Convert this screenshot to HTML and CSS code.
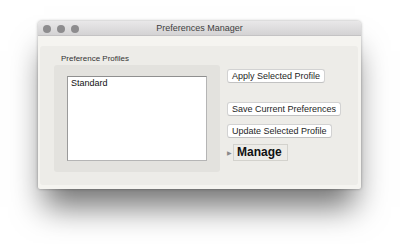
FILE: index.html
```html
<!DOCTYPE html>
<html lang="en">

<head>
  <meta charset="UTF-8">
  <title>Preferences Manager</title>
  <link rel="stylesheet" href="styles.css">
</head>

<body>
  <div class="window">
    <div class="titlebar">
      <div class="lights">
        <span class="light"></span>
        <span class="light"></span>
        <span class="light"></span>
      </div>
      <div class="title">Preferences Manager</div>
    </div>
    <div class="content">
      <div class="panel">
        <div class="profiles">
          <div class="group-label">Preference Profiles</div>
          <div class="group">
            <div class="list">
              <div class="item">Standard</div>
            </div>
          </div>
        </div>
        <div class="actions">
          <button class="btn">Apply Selected Profile</button>
          <button class="btn btn-save">Save Current Preferences</button>
          <button class="btn">Update Selected Profile</button>
          <div class="manage">
            <span class="arrow">&#9654;</span>
            <span class="manage-box">Manage</span>
          </div>
        </div>
      </div>
    </div>
  </div>
</body>

</html>
```

FILE: styles.css
```css
* {
  margin: 0px;
  padding: 0px;
  box-sizing: border-box;
  font-family: "Liberation Sans", Arial, sans-serif;
}

html,
body {
  height: 100%;
}

body {
  background-color: white;
  padding: 21px 0 0 38px;
}

.window {
  width: 323px;
  height: 168px;
  border-radius: 4px 4px 2px 2px;
  background-color: hsl(48, 18%, 95%);
  box-shadow: 0 24px 30px -6px rgba(0, 0, 0, 0.55), 0 0 3px rgba(0, 0, 0, 0.35);
  display: flex;
  flex-direction: column;
}

.titlebar {
  height: 15px;
  background: linear-gradient(#e9e8e9, #d4d3d4);
  border-bottom: 1px solid #c4c3c4;
  border-radius: 4px 4px 0 0;
  position: relative;
  display: flex;
  align-items: center;
  justify-content: center;
}

.lights {
  position: absolute;
  left: 5px;
  top: 4px;
  display: flex;
  gap: 6px;
}

.light {
  width: 8px;
  height: 8px;
  border-radius: 50%;
  background-color: #8d8c8e;
}

.title {
  font-size: 9px;
  color: #3f3f3f;
  line-height: 15px;
}

.content {
  flex: 1;
  padding: 10px 3px 4px 2px;
}

.panel {
  height: 100%;
  background-color: #edece8;
  border-radius: 3px;
  display: flex;
  padding: 8px 0 0 14px;
}

.profiles {
  width: 166px;
}

.group-label {
  font-size: 8px;
  line-height: 10px;
  color: #333;
  padding-left: 7px;
  margin-bottom: 1px;
}

.group {
  height: 107px;
  background-color: #e3e2de;
  border-radius: 3px;
  padding: 11px 0 0 13px;
}

.list {
  width: 140px;
  height: 85px;
  background-color: white;
  border: 1px solid #b5b5b5;
  border-top-color: #8f8f8f;
  border-left-color: #9a9a9a;
  padding: 1px 3px;
}

.item {
  font-size: 9px;
  color: #111;
  line-height: 11px;
}

.actions {
  margin-left: 7px;
  padding-top: 15px;
  display: flex;
  flex-direction: column;
  align-items: flex-start;
}

.btn {
  font-size: 9px;
  color: #1e1e1e;
  background-color: white;
  border: 1px solid #d2d2d2;
  border-bottom-color: #c2c2c2;
  border-radius: 3px;
  height: 14px;
  line-height: 12px;
  padding: 0 4px;
  margin-bottom: 8px;
}

.btn-save {
  margin-top: 11px;
}

.manage {
  display: flex;
  align-items: center;
  margin-top: -2px;
}

.arrow {
  font-size: 6px;
  color: #8a8a8a;
  width: 6px;
}

.manage-box {
  font-size: 12px;
  font-weight: bold;
  color: #111;
  border: 1px solid #d3d2cd;
  height: 17px;
  line-height: 15px;
  padding: 0 5px 0 3px;
}
```
